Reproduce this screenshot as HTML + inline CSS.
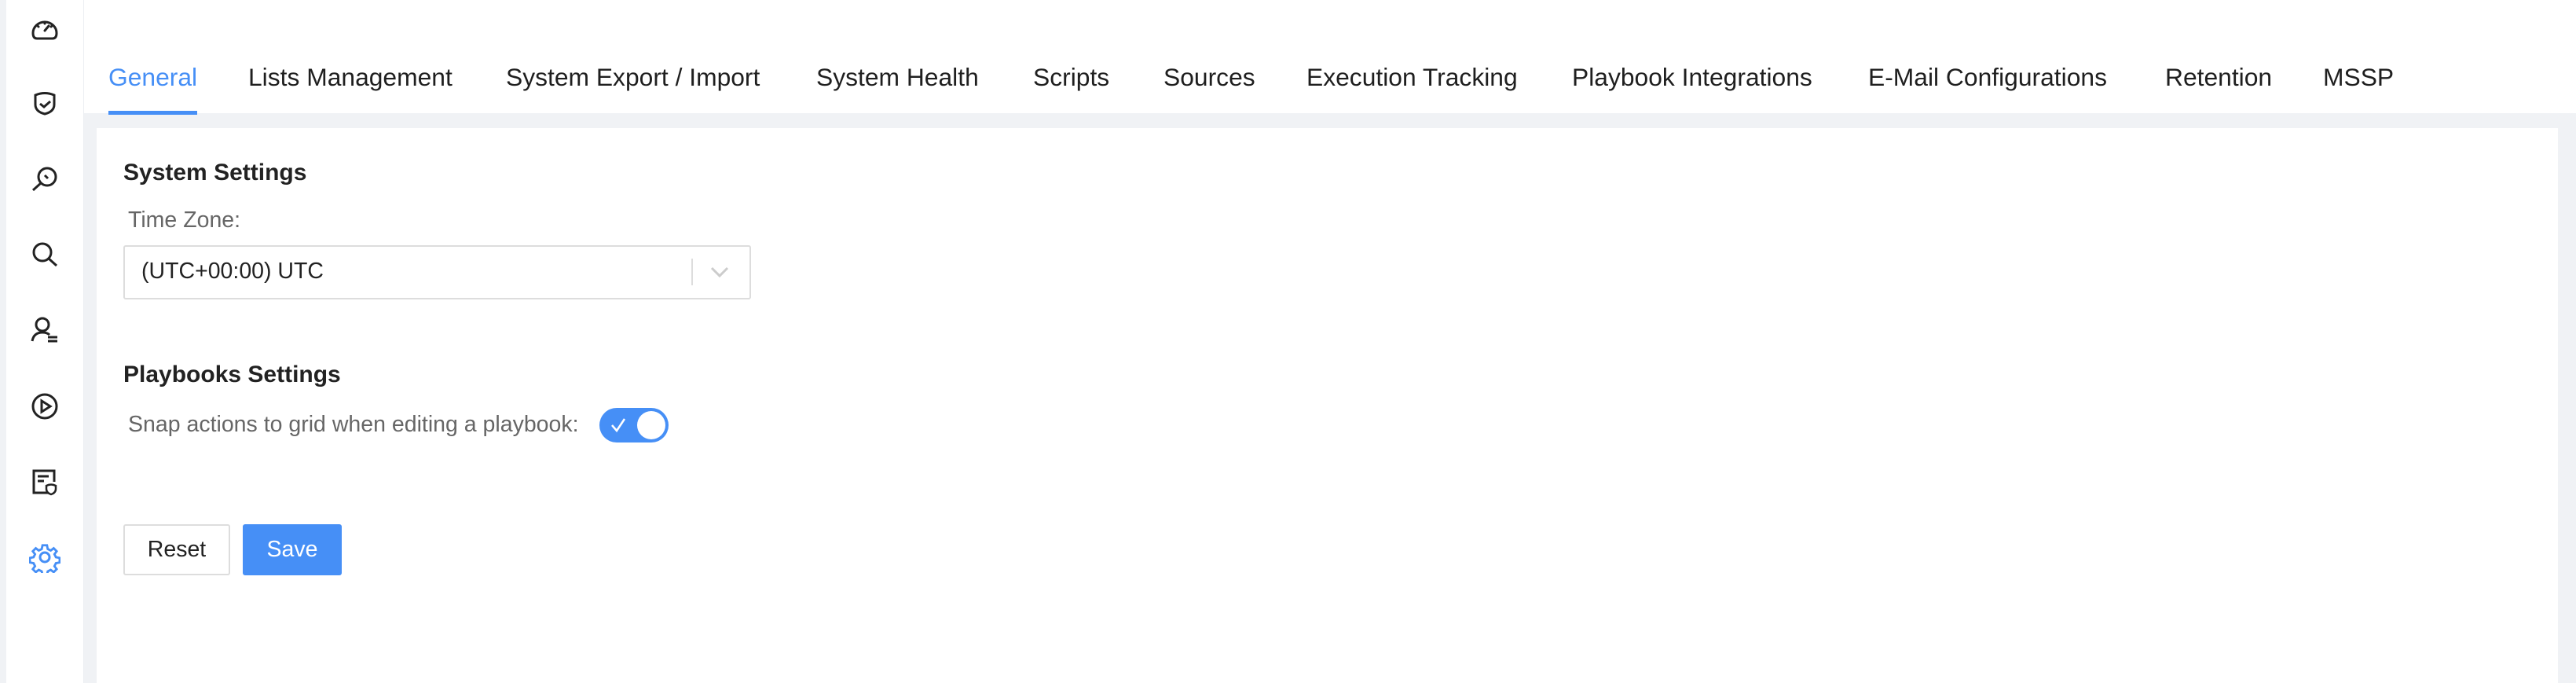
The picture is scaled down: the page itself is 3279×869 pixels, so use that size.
<!DOCTYPE html>
<html><head><meta charset="utf-8"><style>
*{margin:0;padding:0;box-sizing:border-box}
body{width:3279px;height:869px;background:#f0f2f5;font-family:"Liberation Sans",sans-serif;position:relative;overflow:hidden;color:#1f1f1f}
.side{position:absolute;left:8px;top:0;width:99px;height:869px;background:#fff;border-right:1px solid #eceef2}
.ic{position:absolute;left:29px;width:40px;height:40px}
.top{position:absolute;left:107px;top:0;right:0;height:144px;background:#fff}
.tab{position:absolute;top:80px;font-size:31.8px;color:#1f1f1f;white-space:nowrap}
.ul{position:absolute;left:138px;top:141px;width:113px;height:5px;background:#468ff6}
.card{position:absolute;left:123px;top:163px;width:3133px;height:706px;background:#fff}
.h{position:absolute;font-size:30px;font-weight:bold;color:#222}
.lbl{position:absolute;font-size:28.5px;color:#666}
</style></head><body>
<div class="side">
<svg class="ic" style="top:16px" viewBox="0 0 40 40" fill="none" stroke="#222" stroke-width="3"><path d="M5 26a15 14 0 1 1 30 0q0 7-5 7H10q-5 0-5-7z"/><path d="M20 23l5-6M20 12v2M11 17l1 1M29 17l-1 1" stroke-linecap="round"/></svg>
<svg class="ic" style="top:112px" viewBox="0 0 40 40" fill="none" stroke="#222" stroke-width="3"><path d="M8 9q12-5 24 0v12q0 9-12 12Q8 30 8 21z"/><path d="M14 20l5 4 8-7"/></svg>
<svg class="ic" style="top:208px" viewBox="0 0 40 40" fill="none" stroke="#222" stroke-width="3"><circle cx="23" cy="17" r="11"/><path d="M15 25L5 34M20 15l4 4"/></svg>
<svg class="ic" style="top:304px" viewBox="0 0 40 40" fill="none" stroke="#222" stroke-width="3"><circle cx="17" cy="17" r="11"/><path d="M25 25l10 9"/></svg>
<svg class="ic" style="top:400px" viewBox="0 0 40 40" fill="none" stroke="#222" stroke-width="3"><circle cx="17" cy="13" r="8"/><path d="M4 34q2-11 13-11 6 0 9 3M24 29h12M24 34h12"/></svg>
<svg class="ic" style="top:497px" viewBox="0 0 40 40" fill="none" stroke="#222" stroke-width="3"><circle cx="20" cy="20" r="15"/><path d="M16 13v14l11-7z"/></svg>
<svg class="ic" style="top:593px" viewBox="0 0 40 40" fill="none" stroke="#222" stroke-width="3"><path d="M24 34H6V6h26v14M11 13h14M11 19h8"/><path d="M22 25q6-3 12 0v4q0 5-6 7-6-2-6-7z" stroke-width="2.5"/></svg>
<svg class="ic" style="top:689px" viewBox="0 0 40 40" fill="none" stroke="#468ff6" stroke-width="3"><path d="M17 4h6l1 5 4 2 4-3 4 4-3 4 2 4 5 1v6l-5 1-2 4 3 4-4 4-4-3-4 2-1 5h-6l-1-5-4-2-4 3-4-4 3-4-2-4-5-1v-6l5-1 2-4-3-4 4-4 4 3 4-2z" transform="scale(.95) translate(1 1)"/><circle cx="20" cy="20" r="6"/></svg>
</div>
<div class="top">
</div>
<div class="tab" style="left:138px;color:#468ff6">General</div>
<div class="tab" style="left:316px">Lists Management</div>
<div class="tab" style="left:644px">System Export / Import</div>
<div class="tab" style="left:1039px">System Health</div>
<div class="tab" style="left:1315px">Scripts</div>
<div class="tab" style="left:1481px">Sources</div>
<div class="tab" style="left:1663px">Execution Tracking</div>
<div class="tab" style="left:2001px">Playbook Integrations</div>
<div class="tab" style="left:2378px">E-Mail Configurations</div>
<div class="tab" style="left:2756px">Retention</div>
<div class="tab" style="left:2957px">MSSP</div>
<div class="ul"></div>
<div class="card"></div>
<div class="h" style="left:157px;top:203px">System Settings</div>
<div class="lbl" style="left:163px;top:264px">Time Zone:</div>
<div style="position:absolute;left:157px;top:312px;width:799px;height:69px;border:2px solid #ddd;border-radius:3px;background:#fff"></div>
<div style="position:absolute;left:180px;top:329px;font-size:28.5px;color:#222">(UTC+00:00) UTC</div>
<div style="position:absolute;left:880px;top:329px;width:2px;height:34px;background:#ddd"></div>
<svg style="position:absolute;left:902px;top:336px" width="28" height="20" viewBox="0 0 28 20" fill="none" stroke="#ccc" stroke-width="3"><path d="M4 5l10 10 10-10"/></svg>
<div class="h" style="left:157px;top:460px">Playbooks Settings</div>
<div class="lbl" style="left:163px;top:524px">Snap actions to grid when editing a playbook:</div>
<div style="position:absolute;left:763px;top:519px;width:88px;height:44px;border-radius:22px;background:#468ff6"></div>
<div style="position:absolute;left:811px;top:523px;width:36px;height:36px;border-radius:18px;background:#fff"></div>
<svg style="position:absolute;left:776px;top:530px" width="22" height="22" viewBox="0 0 22 22" fill="none" stroke="#fff" stroke-width="2.5"><path d="M3 11l6 7 10-15"/></svg>
<div style="position:absolute;left:157px;top:667px;width:136px;height:65px;border:2px solid #ddd;border-radius:3px;font-size:28.5px;color:#222;text-align:center;line-height:61px">Reset</div>
<div style="position:absolute;left:309px;top:667px;width:126px;height:65px;background:#468ff6;border-radius:3px;font-size:28.5px;color:#fff;text-align:center;line-height:65px">Save</div>
</body></html>
